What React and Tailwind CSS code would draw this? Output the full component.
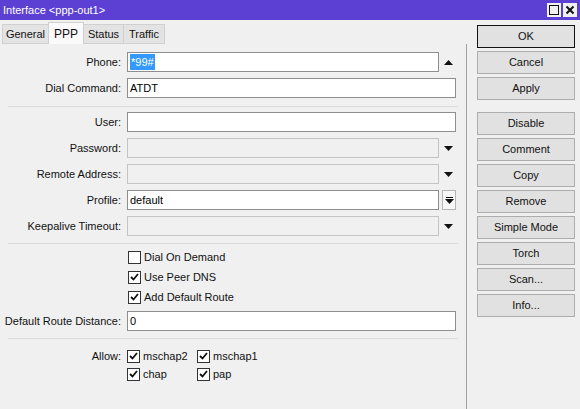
import React from 'react';

const FONT = { fontFamily: '"Liberation Sans", Arial, sans-serif' };

function UpArrow() {
  return (
    <svg width="9" height="5" viewBox="0 0 9 5"><path d="M0 5 L4.5 0 L9 5 Z" fill="#111" /></svg>
  );
}

function DownArrow() {
  return (
    <svg width="9" height="5" viewBox="0 0 9 5"><path d="M0 0 L4.5 5 L9 0 Z" fill="#111" /></svg>
  );
}

function Label({ children }) {
  return <div className="w-[122px] shrink-0 text-right pr-[1px] text-[#111]">{children}</div>;
}

function Field({ value, disabled, arrow, selected, profile }) {
  const narrow = arrow || profile;
  return (
    <div className="flex items-center h-[20px]">
      <div
        className={`h-[20px] flex items-center pl-[2px] border ${
          disabled ? 'bg-[#f0f0f0] border-[#c4c4c4]' : 'bg-white border-[#8e8e8e]'
        } ${narrow ? 'w-[312px]' : 'w-[329px]'}`}
      >
        {selected ? <span className="bg-[#3399ff] text-white px-[1px]">{value}</span> : value}
      </div>
      {arrow === 'up' && (
        <div className="w-[17px] flex justify-center pl-[1px]"><UpArrow /></div>
      )}
      {arrow === 'down' && (
        <div className="w-[17px] flex justify-center pl-[1px]"><DownArrow /></div>
      )}
      {profile && (
        <div className="ml-[3px] w-[14px] h-[20px] border border-[#b5b5b5] bg-[#f7f7f7] flex flex-col items-center justify-center gap-[1px]">
          <div className="w-[7px] h-[1px] bg-[#111]" />
          <DownArrow />
        </div>
      )}
    </div>
  );
}

function Row({ label, ...rest }) {
  return (
    <div className="flex items-center gap-[5px]">
      <Label>{label}</Label>
      <Field {...rest} />
    </div>
  );
}

function Check({ checked, label, w }) {
  return (
    <div className={`flex items-center gap-[3px] ${w || ''}`}>
      <div className="w-[13px] h-[13px] border border-[#333] bg-white flex items-center justify-center">
        {checked && (
          <svg width="9" height="8" viewBox="0 0 9 8">
            <path d="M1 4 L3.5 6.5 L8 1" stroke="#111" strokeWidth="1.8" fill="none" />
          </svg>
        )}
      </div>
      <span className="text-[#111]">{label}</span>
    </div>
  );
}

function Sep({ className }) {
  return <div className={`ml-[8px] w-[450px] h-px bg-[#dcdcdc] ${className}`} />;
}

function Btn({ children, primary }) {
  return (
    <div
      className={`h-[23px] w-[98px] flex items-center justify-center bg-[#e1e1e1] border ${
        primary ? 'border-[#111]' : 'border-[#adadad]'
      } text-[#111]`}
    >
      {children}
    </div>
  );
}

const TABS = [
  { name: 'General', w: 'w-[47px]' },
  { name: 'PPP', w: 'w-[36px]', active: true },
  { name: 'Status', w: 'w-[41px]' },
  { name: 'Traffic', w: 'w-[42px]' },
];

export default function App() {
  return (
    <div className="w-[580px] h-[409px] bg-[#f0f0f0] flex flex-col overflow-hidden text-[11px]" style={FONT}>
      {/* title bar */}
      <div className="h-[20px] bg-[#5b40d3] flex items-center justify-between pl-[3px] pr-[3px]">
        <span className="text-white text-[11px]">Interface &lt;ppp-out1&gt;</span>
        <div className="flex gap-[2px]">
          <div className="w-[14px] h-[14px] bg-[#f0f0f0] flex items-center justify-center">
            <div className="w-[10px] h-[10px] border-[1.5px] border-[#111]" />
          </div>
          <div className="w-[14px] h-[14px] bg-[#f0f0f0] flex items-center justify-center">
            <svg width="10" height="10" viewBox="0 0 10 10">
              <path d="M1.5 1.5 L8.5 8.5 M8.5 1.5 L1.5 8.5" stroke="#111" strokeWidth="2" />
            </svg>
          </div>
        </div>
      </div>

      <div className="flex flex-1">
        {/* left */}
        <div className="w-[467px] flex flex-col">
          <div className="h-[24px] flex items-end pl-[2px]">
            {TABS.map((t) =>
              t.active ? (
                <div key={t.name} className={`${t.w} h-[22px] flex items-center justify-center bg-[#fafafa] border border-b-0 border-[#d0d0d0] -ml-px text-[12px] text-[#111]`}>
                  {t.name}
                </div>
              ) : (
                <div key={t.name} className={`${t.w} h-[20px] flex items-center justify-center bg-[#e3e3e3] border border-[#d0d0d0] -ml-px first:ml-0 text-[#111]`}>
                  {t.name}
                </div>
              )
            )}
          </div>
          <div className="flex-1 border-r border-[#a0a0a0] pt-[8px] flex flex-col">
            <Row label="Phone:" value="*99#" selected arrow="up" />
            <div className="mt-[6px]"><Row label="Dial Command:" value="ATDT" /></div>
            <Sep className="mt-[8px] mb-[5px]" />
            <Row label="User:" value="" />
            <div className="mt-[6px]"><Row label="Password:" value="" disabled arrow="down" /></div>
            <div className="mt-[6px]"><Row label="Remote Address:" value="" disabled arrow="down" /></div>
            <div className="mt-[6px]"><Row label="Profile:" value="default" profile /></div>
            <div className="mt-[6px]"><Row label="Keepalive Timeout:" value="" disabled arrow="down" /></div>
            <Sep className="mt-[7px] mb-[3px]" />
            <div className="pl-[128px] flex flex-col">
              <div className="h-[20px] flex items-center"><Check label="Dial On Demand" /></div>
              <div className="h-[20px] flex items-center"><Check checked label="Use Peer DNS" /></div>
              <div className="h-[20px] flex items-center"><Check checked label="Add Default Route" /></div>
            </div>
            <div className="mt-[4px]"><Row label="Default Route Distance:" value="0" /></div>
            <Sep className="mt-[7px] mb-[8px]" />
            <div className="flex items-start gap-[5px]">
              <div className="h-[18px] flex items-center"><Label>Allow:</Label></div>
              <div className="flex flex-col">
                <div className="h-[18px] flex items-center">
                  <Check checked label="mschap2" w="w-[70px]" />
                  <Check checked label="mschap1" />
                </div>
                <div className="h-[18px] flex items-center">
                  <Check checked label="chap" w="w-[70px]" />
                  <Check checked label="pap" />
                </div>
              </div>
            </div>
          </div>
        </div>

        {/* right */}
        <div className="flex-1 pl-[10px] pt-[5px] flex flex-col gap-[3px]">
          <Btn primary>OK</Btn>
          <Btn>Cancel</Btn>
          <Btn>Apply</Btn>
          <div className="h-[6px]" />
          <Btn>Disable</Btn>
          <Btn>Comment</Btn>
          <Btn>Copy</Btn>
          <Btn>Remove</Btn>
          <Btn>Simple Mode</Btn>
          <Btn>Torch</Btn>
          <Btn>Scan...</Btn>
          <Btn>Info...</Btn>
        </div>
      </div>
    </div>
  );
}
